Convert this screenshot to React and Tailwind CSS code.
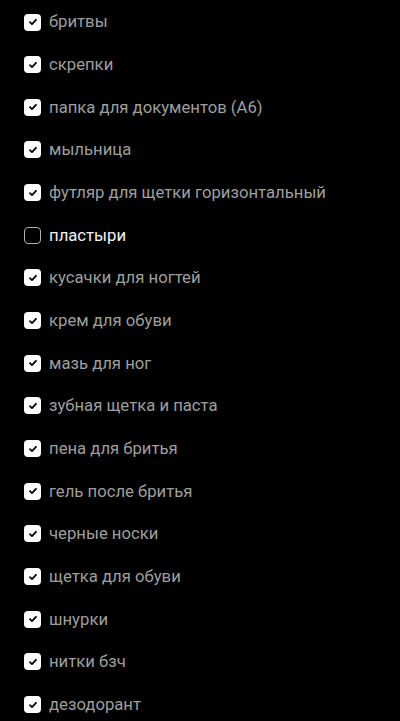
import React from "react";

const items = [
  ["бритвы", true],
  ["скрепки", true],
  ["папка для документов (А6)", true],
  ["мыльница", true],
  ["футляр для щетки горизонтальный", true],
  ["пластыри", false],
  ["кусачки для ногтей", true],
  ["крем для обуви", true],
  ["мазь для ног", true],
  ["зубная щетка и паста", true],
  ["пена для бритья", true],
  ["гель после бритья", true],
  ["черные носки", true],
  ["щетка для обуви", true],
  ["шнурки", true],
  ["нитки бзч", true],
  ["дезодорант", true],
];

const Check = ({ on }) =>
  on ? (
    <span className="w-[17px] h-[17px] rounded-[4px] bg-white flex items-center justify-center shrink-0">
      <svg width="10" height="10" viewBox="0 0 10 10">
        <path d="M2 5.2 L4 7.2 L8 2.8" fill="none" stroke="#000" strokeWidth="1.8" strokeLinecap="round" strokeLinejoin="round" />
      </svg>
    </span>
  ) : (
    <span className="w-[17px] h-[17px] rounded-[4px] border-[1.5px] border-[#b0b0b0] shrink-0" />
  );

export default function App() {
  return (
    <div className="bg-black w-[400px] h-[721px] overflow-hidden pt-[0.7px] px-6" style={{ fontFamily: "Roboto, sans-serif" }}>
      {items.map(([label, on]) => (
        <div key={label} className="h-[42.67px] flex items-center gap-[8px]">
          <Check on={on} />
          <span className={`text-[16.7px] ${on ? "text-[#9e9e9e]" : "text-[#f2f2f2]"}`}>{label}</span>
        </div>
      ))}
    </div>
  );
}
